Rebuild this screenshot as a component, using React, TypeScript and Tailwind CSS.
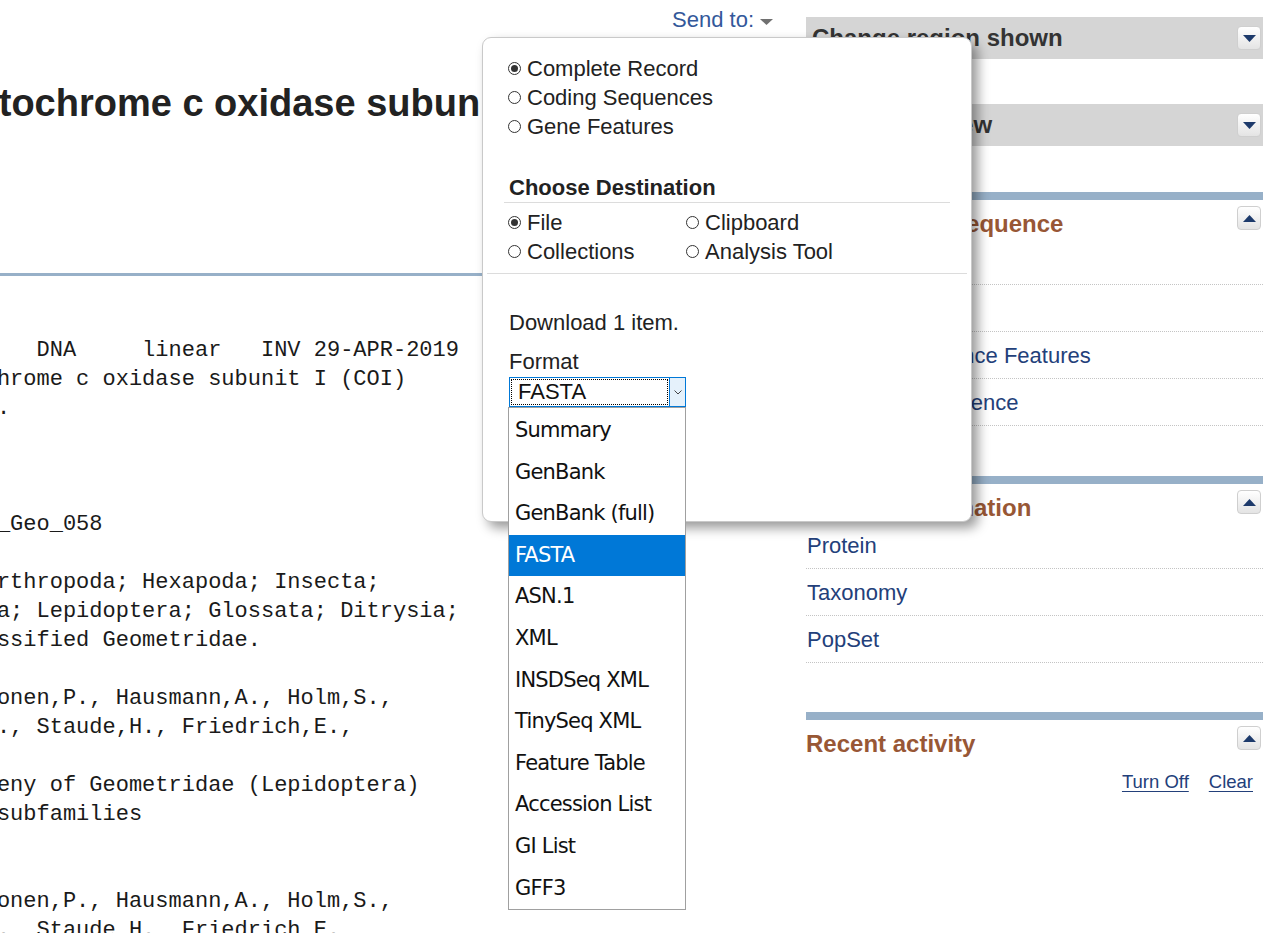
import React from "react";

const row = (label: string, text: string) => label.padEnd(12) + text;

const record = [
  row("LOCUS", "MK738325".padEnd(25) + "658 bp    DNA     linear   INV 29-APR-2019"),
  row("DEFINITION", "Geometridae sp. EM_Geo_058 cytochrome c oxidase subunit I (COI)"),
  row("", "gene, partial cds; mitochondrial."),
  row("ACCESSION", "MK738325"),
  row("VERSION", "MK738325.1"),
  row("KEYWORDS", "BARCODE."),
  row("SOURCE", "mitochondrion Geometridae sp. EM_Geo_058"),
  row("  ORGANISM", "Geometridae sp. EM_Geo_058"),
  row("", "Eukaryota; Metazoa; Ecdysozoa; Arthropoda; Hexapoda; Insecta;"),
  row("", "Pterygota; Neoptera; Holometabola; Lepidoptera; Glossata; Ditrysia;"),
  row("", "Geometroidea; Geometridae; unclassified Geometridae."),
  row("REFERENCE", "1  (bases 1 to 658)"),
  row("  AUTHORS", "Murillo-Ramos,L., Brehm,G., Sihvonen,P., Hausmann,A., Holm,S.,"),
  row("", "Ghanavi,H., Ounap,E., Truuverk,A., Staude,H., Friedrich,E.,"),
  row("", "Tammaru,T. and Wahlberg,N."),
  row("  TITLE", "A comprehensive molecular phylogeny of Geometridae (Lepidoptera)"),
  row("", "with a focus on enigmatic small subfamilies"),
  row("  JOURNAL", "PeerJ 7, E7386 (2019)"),
  row("REFERENCE", "2  (bases 1 to 658)"),
  row("  AUTHORS", "Murillo-Ramos,L., Brehm,G., Sihvonen,P., Hausmann,A., Holm,S.,"),
  row("", "Ghanavi,H., Ounap,E., Truuverk,A., Staude,H., Friedrich,E.,"),
].join("\n");

const formats = [
  "Summary",
  "GenBank",
  "GenBank (full)",
  "FASTA",
  "ASN.1",
  "XML",
  "INSDSeq XML",
  "TinySeq XML",
  "Feature Table",
  "Accession List",
  "GI List",
  "GFF3",
];

function ToggleButton({ up }: { up?: boolean }) {
  return (
    <div className="w-[24px] h-[24px] rounded-[4px] border border-[#cfcfcf] bg-gradient-to-b from-white to-[#e4e4e4] flex items-center justify-center">
      <svg width="13" height="7" viewBox="0 0 13 7">
        {up ? <path d="M0 7 L6.5 0 L13 7 Z" fill="#1d3a6b" /> : <path d="M0 0 L13 0 L6.5 7 Z" fill="#1d3a6b" />}
      </svg>
    </div>
  );
}

function Radio({ checked, label }: { checked?: boolean; label: string }) {
  return (
    <div className="flex items-center gap-[6px] h-[29px]">
      <span className="w-[13px] h-[13px] rounded-full border border-[#333] bg-white flex items-center justify-center">
        {checked && <span className="w-[7px] h-[7px] rounded-full bg-[#333]" />}
      </span>
      <span>{label}</span>
    </div>
  );
}

function Portlet({ title, items, className }: { title: string; items: string[]; className: string }) {
  return (
    <div className={className}>
      <div className="border-t-[8px] border-[#97b0c8] flex justify-between items-start">
        <h3 className="mt-[10px] text-[24px] leading-[28px] font-bold text-[#985735]">{title}</h3>
        <div className="mt-[6px] mr-[2px]">
          <ToggleButton up />
        </div>
      </div>
      <ul>
        {items.map((item) => (
          <li key={item} className="h-[47px] border-b border-dotted border-[#c4c4c4] flex items-center pl-[1px] text-[22px] text-[#23407a]">
            {item}
          </li>
        ))}
      </ul>
    </div>
  );
}

export default function App() {
  return (
    <div className="relative w-[1281px] h-[933px] overflow-hidden bg-white font-['Liberation_Sans',Arial,sans-serif] text-[#222] flex">
      {/* main record column, scrolled sideways */}
      <div className="w-[806px] shrink-0 overflow-hidden">
        <div className="flex justify-end items-center gap-[6px] pr-[33px] mt-[8px] h-[24px]">
          <span className="text-[22px] leading-[24px] text-[#33589a]">Send to:</span>
          <svg width="13" height="6" viewBox="0 0 13 6" className="mt-[4px]">
            <path d="M0 0 L13 0 L6.5 6 Z" fill="#707070" />
          </svg>
        </div>
        <div className="ml-[-584px] w-[1359px]">
          <h1 className="mt-[49px] ml-[-15px] text-[38px] leading-[44px] font-bold whitespace-nowrap text-[#222]">
            Geometridae sp. EM_Geo_058 cytochrome c oxidase subunit I (COI) gene, partial cds; mitochondrial
          </h1>
          <div className="mt-[148px] border-t-[3px] border-[#97b0c8]" />
          <pre className="mt-[60px] font-['Liberation_Mono','Courier_New',monospace] text-[22px] leading-[29px] text-[#1a1a1a] whitespace-pre">
            {record}
          </pre>
        </div>
      </div>

      {/* right sidebar */}
      <div className="w-[457px] shrink-0 pt-[17px]">
        <div className="h-[42px] bg-[#d5d5d5] flex items-center justify-between pl-[6px] pr-[2px]">
          <span className="text-[24px] font-bold text-[#333]">Change region shown</span>
          <ToggleButton />
        </div>
        <div className="mt-[45px] h-[42px] bg-[#d5d5d5] flex items-center justify-between pl-[6px] pr-[2px]">
          <span className="text-[24px] font-bold text-[#333]">Customize view</span>
          <ToggleButton />
        </div>
        <Portlet
          className="mt-[46px]"
          title="Analyze this sequence"
          items={["Run BLAST", "Pick Primers", "Highlight Sequence Features", "Find in this Sequence"]}
        />
        <Portlet className="mt-[50px]" title="Related information" items={["Protein", "Taxonomy", "PopSet"]} />
        <div className="mt-[49px]">
          <div className="border-t-[8px] border-[#97b0c8] flex justify-between items-start">
            <h3 className="mt-[10px] text-[24px] leading-[28px] font-bold text-[#985735]">Recent activity</h3>
            <div className="mt-[6px] mr-[2px]">
              <ToggleButton up />
            </div>
          </div>
          <div className="mt-[10px] flex justify-end gap-[20px] pr-[10px] text-[18.5px] leading-[28px] text-[#23407a]">
            <span className="underline underline-offset-[3px]">Turn Off</span>
            <span className="underline underline-offset-[3px]">Clear</span>
          </div>
        </div>
      </div>

      {/* Send to popup */}
      <div className="absolute left-[482px] top-[37px] w-[490px] h-[485px] rounded-[9px] border border-[#c9c9c9] bg-white shadow-[6px_6px_12px_rgba(0,0,0,0.4)] text-[22px] leading-[29px] text-[#222]">
        <div className="pt-[16px] pl-[25px]">
          <Radio checked label="Complete Record" />
          <Radio label="Coding Sequences" />
          <Radio label="Gene Features" />
        </div>
        <div className="mt-[32px] mx-[21px] pl-[5px] border-b border-[#dcdcdc] font-bold">Choose Destination</div>
        <div className="mt-[5px] pl-[25px] grid grid-cols-[178px_1fr]">
          <Radio checked label="File" />
          <Radio label="Clipboard" />
          <Radio label="Collections" />
          <Radio label="Analysis Tool" />
        </div>
        <div className="mt-[7px] mx-[4px] border-b border-[#dcdcdc]" />
        <div className="pl-[26px]">
          <p className="mt-[34px]">Download 1 item.</p>
          <p className="mt-[10px]">Format</p>
          <div className="mt-[1px] w-[177px] h-[30px] border border-[#0078d7] flex">
            <div className="flex-1 m-[1px] border border-dotted border-black flex items-center pl-[6px] leading-none text-[#111]">
              FASTA
            </div>
            <div className="w-[16px] bg-[#e5f1fb] border-l border-[#0078d7] flex items-center justify-center">
              <svg width="8" height="5" viewBox="0 0 8 5">
                <path d="M0.5 0.5 L4 4 L7.5 0.5" stroke="#444" strokeWidth="1" fill="none" />
              </svg>
            </div>
          </div>
        </div>
      </div>

      {/* open select list */}
      <ul className="absolute left-[508px] top-[407px] w-[178px] h-[503px] pt-[2px] border border-[#a0a0a0] bg-white font-['DejaVu_Sans',Verdana,sans-serif] text-[21px] tracking-[-0.8px] text-[#111]">
        {formats.map((f) => (
          <li
            key={f}
            className={
              f === "FASTA"
                ? "h-[41.6px] flex items-center pl-[6px] bg-[#0078d7] text-white"
                : "h-[41.6px] flex items-center pl-[6px]"
            }
          >
            {f}
          </li>
        ))}
      </ul>
    </div>
  );
}
